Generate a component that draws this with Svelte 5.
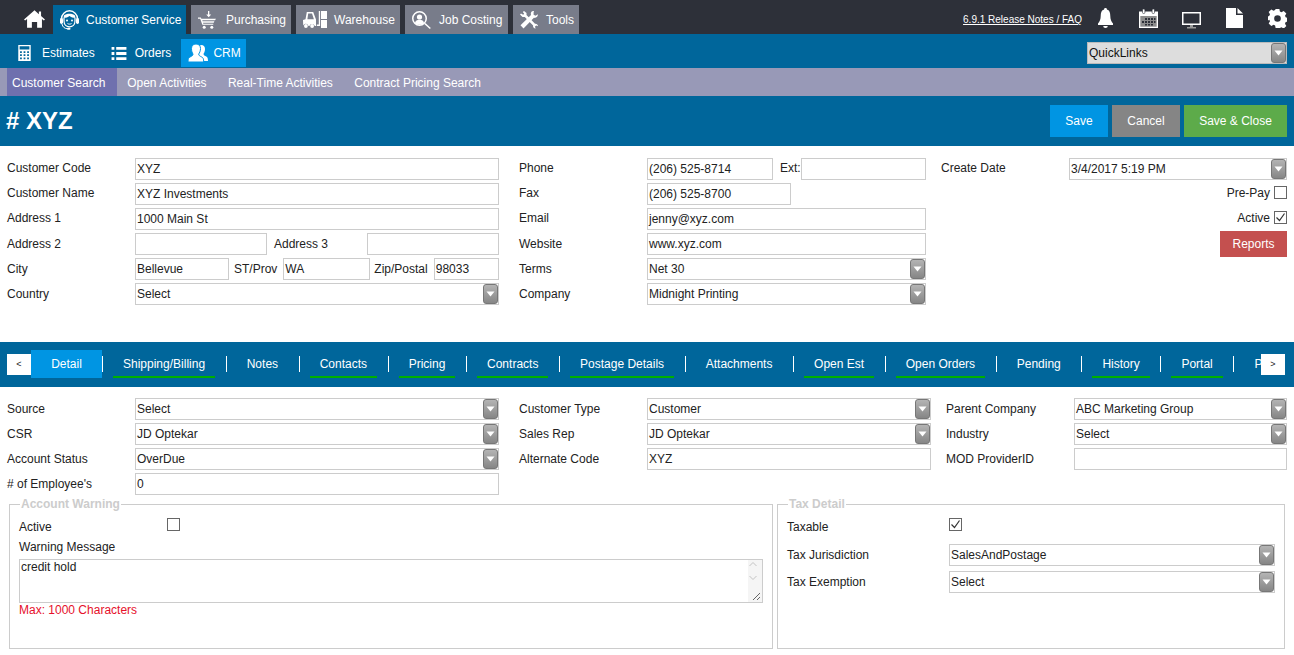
<script>
  const topTabs = [
    { label: 'Customer Service', icon: 'agent', active: true, w: 133, textAt: 33 },
    { label: 'Purchasing', icon: 'cart', w: 100, textAt: 35 },
    { label: 'Warehouse', icon: 'lift', w: 104, textAt: 38 },
    { label: 'Job Costing', icon: 'search', w: 103, textAt: 34 },
    { label: 'Tools', icon: 'tools', w: 66, textAt: 33 }
  ]
  const subTabs = ['Open Activities', 'Real-Time Activities', 'Contract Pricing Search']
  const tabs = [
    ['Shipping/Billing', 1], ['Notes', 0], ['Contacts', 1], ['Pricing', 1], ['Contracts', 1],
    ['Postage Details', 1], ['Attachments', 0], ['Open Est', 1], ['Open Orders', 1],
    ['Pending', 0], ['History', 1], ['Portal', 1]
  ]
</script>

{#snippet arrow()}
  <span class="arrow"><svg width="9" height="6" viewBox="0 0 9 6"><path d="M0.5 0.5h8L4.5 5.500z" fill="#fff" /></svg></span>
{/snippet}

{#snippet select(value, cls = '')}
  <div class="input select {cls}"><span>{value}</span>{@render arrow()}</div>
{/snippet}

{#snippet check(on = false)}
  <span class="check">
    {#if on}<svg width="11" height="11" viewBox="0 0 11 11"><path d="M1.500 5.500l3 3 5-7" fill="none" stroke="#333" stroke-width="1.200" /></svg>{/if}
  </span>
{/snippet}

{#snippet topIcon(name)}
  {#if name === 'agent'}
    <svg class="ticon" width="19" height="20" viewBox="0 0 19 20" fill="#fff">
      <path d="M9.500 0.800A8 8 0 0 0 1.500 8.800M9.500 0.800a8 8 0 0 1 8 8" fill="none" stroke="#fff" stroke-width="1.400" />
      <rect x="0" y="8" width="3" height="6" rx="1.400" />
      <rect x="16" y="8" width="3" height="6" rx="1.400" />
      <path d="M4 5.500C6 3 13 3 15 5.500L15.500 8C13 8 11 7.300 9.500 6 8 7.300 6 8 3.500 8z" />
      <path d="M4 8v3c0 3.500 2.500 5.800 5.500 5.800S15 14.500 15 11V8" fill="none" stroke="#fff" stroke-width="1.200" />
      <circle cx="7" cy="10.500" r="1" />
      <circle cx="12" cy="10.500" r="1" />
      <path d="M7.500 13.500c1 .8 3 .8 4 0" fill="none" stroke="#fff" />
      <path d="M2 14c.5 3 2.500 4.500 5.500 4.800" fill="none" stroke="#fff" />
      <rect x="7" y="17.800" width="3.500" height="2" rx="1" />
    </svg>
  {:else if name === 'cart'}
    <svg class="ticon" width="18" height="18" viewBox="0 0 18 18" fill="#fff">
      <path d="M10 0h1.300v3.500h1.900L10.700 6.300 8.200 3.500H10z" />
      <path d="M0 6.500h2.800l.6 1.300H18l-1 1.500H4.300l.3 1h11.800l-.7 1.400H5l.3 1h10v1H4.300L2.200 7.800H0z" />
      <circle cx="6.200" cy="16.300" r="1.500" />
      <circle cx="13.800" cy="16.300" r="1.500" />
    </svg>
  {:else if name === 'lift'}
    <svg class="ticon" width="24" height="17" viewBox="0 0 24 17" fill="#fff">
      <path fill-rule="evenodd" d="M0 9l2.500-.8L3.800 1h6.400L13 8.500V15h-1.200a2.800 2.800 0 0 0-5.400 0H5.500a2.800 2.800 0 0 0-5.300-.5zM5.200 2.500l-.8 5.700h6.500L9 2.500z" />
      <path d="M13.800 13.500h2V0h1.300v15h-3.300z" />
      <path d="M18 0h6v8h-6zM18 9h6v8h-6z" />
      <circle cx="2.900" cy="15" r="1.900" />
      <circle cx="9.100" cy="15" r="1.900" />
    </svg>
  {:else if name === 'search'}
    <svg class="ticon" width="19" height="18" viewBox="0 0 19 18" fill="#fff">
      <path fill-rule="evenodd" d="M7.500 0a7.500 7.500 0 1 0 0 15 7.500 7.500 0 0 0 0-15zm0 1.500a6 6 0 1 1 0 12 6 6 0 0 1 0-12z" />
      <circle cx="7.500" cy="6" r="2.600" />
      <path d="M3 12c.4-2.500 2-3.200 4.500-3.200S11.600 9.500 12 12c-2 2.200-7 2.200-9 0z" />
      <path d="M12.300 13l1.100-1.100 5.400 5-1 1.100z" />
    </svg>
  {:else}
    <svg class="ticon" width="18" height="18" viewBox="0 0 18 18" fill="#fff">
      <path d="M4 0l2.500 2v2L15 12.800c1.500-.3 3 .7 3 2.400l-1.800-.8-1.300 1.300.8 1.800c-2 0-3-1.500-2.600-3L4.800 6H2.500L0 3.500 1 2.500l2.200 1.300 1-1L2.800.9z" />
      <path d="M14 0c-1.800-.2-3.200 1-3.200 2.700 0 .4.100.8.200 1.200L0.500 14.200 3.500 17.500 13.900 6.800c2.200.5 4.300-1.200 3.900-3.500l-2.200 1.400-2-1V1.500z" />
    </svg>
  {/if}
{/snippet}

<div class="page">
  <div class="topbar">
    <svg class="home" width="21" height="18" viewBox="0 0 24 20" fill="#fff">
      <path d="M12 0L0 10.500l1.300 1.300L3.500 10v10H9v-6.500h6V20h5.500V10l2.200 1.800 1.300-1.300L19.500 6.500V1.500H17v3z" />
    </svg>
    {#each topTabs as t}
      <div class="top-tab" class:active={t.active} style="width:{t.w}px;grid-template-columns:{t.textAt}px 1fr">
        {@render topIcon(t.icon)}
        <span>{t.label}</span>
      </div>
    {/each}
    <div class="top-right">
      <a href="#notes" class="notes">6.9.1 Release Notes / FAQ</a>
      <svg class="bell" width="15" height="20" viewBox="0 0 15 20" fill="#fff"><path d="M7.500 0a1.400 1.400 0 0 0-1.400 1.600C3.500 2.300 2.700 4.800 2.700 8c0 3.500-1 5.500-2.700 7.500v1.500h15v-1.500C13.300 13.500 12.300 11.500 12.300 8c0-3.200-.8-5.700-3.400-6.400A1.400 1.400 0 0 0 7.500 0zM5.200 18a2.300 2 0 0 0 4.600 0z" /></svg>
      <svg class="cal" width="19" height="19" viewBox="0 0 19 19">
        <path d="M0 2.500h19V19H0z" fill="#fff" />
        <path d="M1.300 7h16.400v10.700H1.300z" fill="#8c8c8c" />
        <rect x="3.500" y="0" width="2.400" height="4.500" rx="1" fill="#fff" stroke="#2d3039" stroke-width=".6" />
        <rect x="13.100" y="0" width="2.400" height="4.500" rx="1" fill="#fff" stroke="#2d3039" stroke-width=".6" />
        <path d="M6 9h2v2H6zm3 0h2v2H9zm3 0h2v2h-2zm3 0h1.500v2H15zM3 12h2v2H3zm3 0h2v2H6zm3 0h2v2H9zm3 0h2v2h-2zm3 0h1.500v2H15zM6 15h2v1.500H6zm3 0h2v1.500H9zm3 0h2v1.500h-2z" fill="#2d3039" />
      </svg>
      <svg class="mon" width="19" height="17" viewBox="0 0 19 17">
        <path fill-rule="evenodd" fill="#fff" d="M0 0h19v13H0zM1.500 1.500v10h16v-10z" />
        <path fill="#9a9a9a" d="M8 13h3v2h3v1.500H5V15h3z" />
      </svg>
      <svg width="17" height="20" viewBox="0 0 17 20" fill="#fff"><path d="M0 0h10v7h7v13H0zM11.500 0L17 5.500h-5.500z" /></svg>
      <svg width="19" height="19" viewBox="0 0 20 20" fill="#fff"><path fill-rule="evenodd" d="M8 0h4l.5 2.700 1.700.7 2.300-1.400 2.800 2.800-1.400 2.300.7 1.700 2.400.5v4l-2.400.5-.7 1.700 1.400 2.300-2.800 2.800-2.300-1.400-1.700.7L12 20H8l-.5-2.700-1.700-.7-2.300 1.400L.7 15.200l1.400-2.300-.7-1.700L0 12V8l1.400-.800.7-1.700L.7 3.200 3.500.4l2.300 1.400 1.700-.7zM10 6.500a3.500 3.500 0 1 0 0 7 3.500 3.500 0 0 0 0-7z" /></svg>
    </div>
  </div>

  <div class="navbar">
    <div class="nav-item estimates">
      <svg width="13" height="16" viewBox="0 0 14 18" fill="#fff"><path fill-rule="evenodd" d="M0 0h14v18H0zM1.500 1.500v3.500h11V1.500zM2 7v2h2V7zm4 0v2h2V7zm4 0v2h2V7zM2 10.500v2h2v-2zm4 0v2h2v-2zm4 0v2h2v-2zM2 14v2h2v-2zm4 0v2h2v-2zm4 0v2h2v-2z" /></svg>
      <span>Estimates</span>
    </div>
    <div class="nav-item orders">
      <svg width="16" height="13" viewBox="0 0 16 14" fill="#fff"><path d="M0 0h3v3H0zM5 0h11v3H5zM0 5.500h3v3H0zM5 5.500h11v3H5zM0 11h3v3H0zM5 11h11v3H5z" /></svg>
      <span>Orders</span>
    </div>
    <div class="nav-item crm">
      <svg width="20" height="18" viewBox="0 0 20 18" fill="#fff">
        <path d="M13 1c3 0 4 2 4 4s-.7 3.800-1.500 4.800c0 1.200.8 1.700 2.300 2.500 1.200.6 2.200 1.200 2.200 4.700H10V3z" />
        <path stroke="#0095e3" stroke-width="1" d="M8 0c3 0 4.500 2 4.500 4.500 0 2.500-1 4.500-1.800 5.500 0 1.500 1 2 3 3 1.300.7 2 1.500 2 5H0c0-3.500.7-4.300 2-5 2-1 3-1.500 3-3C4.200 9 3.500 7 3.500 4.500 3.500 2 5 0 8 0z" />
      </svg>
      <span>CRM</span>
    </div>
    <div class="quick">
      <span>QuickLinks</span>
      {@render arrow()}
    </div>
  </div>

  <div class="subbar">
    <div class="sub active">Customer Search</div>
    {#each subTabs as s}
      <div class="sub">{s}</div>
    {/each}
  </div>

  <div class="titlebar">
    <h1># XYZ</h1>
    <div class="actions">
      <button class="btn b-blue">Save</button>
      <button class="btn b-grey">Cancel</button>
      <button class="btn b-green">Save &amp; Close</button>
    </div>
  </div>

  <div class="form top-form">
    <div class="col col-1">
      <div class="row"><label>Customer Code</label><div class="input grow">XYZ</div></div>
      <div class="row"><label>Customer Name</label><div class="input grow">XYZ Investments</div></div>
      <div class="row"><label>Address 1</label><div class="input grow">1000 Main St</div></div>
      <div class="row">
        <label>Address 2</label><div class="input w132"></div>
        <label class="mid a3">Address 3</label><div class="input grow"></div>
      </div>
      <div class="row">
        <label>City</label><div class="input w94">Bellevue</div>
        <label class="mid st">ST/Prov</label><div class="input w87">WA</div>
        <label class="mid zip">Zip/Postal</label><div class="input grow">98033</div>
      </div>
      <div class="row"><label>Country</label>{@render select('Select', 'grow')}</div>
    </div>
    <div class="col col-2">
      <div class="row"><label>Phone</label><div class="input w126">(206) 525-8714</div><label class="mid ext">Ext:</label><div class="input grow"></div></div>
      <div class="row"><label>Fax</label><div class="input w144">(206) 525-8700</div></div>
      <div class="row"><label>Email</label><div class="input grow">jenny@xyz.com</div></div>
      <div class="row"><label>Website</label><div class="input grow">www.xyz.com</div></div>
      <div class="row"><label>Terms</label>{@render select('Net 30', 'grow')}</div>
      <div class="row"><label>Company</label>{@render select('Midnight Printing', 'grow')}</div>
    </div>
    <div class="col col-3">
      <div class="row"><label>Create Date</label>{@render select('3/4/2017 5:19 PM', 'grow')}</div>
      <div class="row end"><span>Pre-Pay</span>{@render check()}</div>
      <div class="row end"><span>Active</span>{@render check(true)}</div>
      <div class="row end"><button class="btn b-red">Reports</button></div>
    </div>
  </div>

  <div class="tabbar">
    <div class="pager">&lt;</div>
    <div class="tab-active">Detail</div>
    <div class="tab-list">
      {#each tabs as [name, marked]}
        <div class="sep"></div>
        <div class="tab" class:marked>{name}</div>
      {/each}
      <div class="sep"></div>
      <div class="tab">P</div>
    </div>
    <div class="pager right">&gt;</div>
  </div>

  <div class="form detail-form">
    <div class="col col-1">
      <div class="row"><label>Source</label>{@render select('Select', 'grow')}</div>
      <div class="row"><label>CSR</label>{@render select('JD Optekar', 'grow')}</div>
      <div class="row"><label>Account Status</label>{@render select('OverDue', 'grow')}</div>
      <div class="row"><label># of Employee's</label><div class="input grow">0</div></div>
    </div>
    <div class="col col-2b">
      <div class="row"><label>Customer Type</label>{@render select('Customer', 'grow')}</div>
      <div class="row"><label>Sales Rep</label>{@render select('JD Optekar', 'grow')}</div>
      <div class="row"><label>Alternate Code</label><div class="input grow">XYZ</div></div>
    </div>
    <div class="col col-3b">
      <div class="row"><label>Parent Company</label>{@render select('ABC Marketing Group', 'grow')}</div>
      <div class="row"><label>Industry</label>{@render select('Select', 'grow')}</div>
      <div class="row"><label>MOD ProviderID</label><div class="input grow"></div></div>
    </div>
  </div>

  <div class="boxes">
    <fieldset class="warn">
      <legend>Account Warning</legend>
      <div class="fs-row"><label>Active</label>{@render check()}</div>
      <div class="msg-label">Warning Message</div>
      <div class="textarea">
        credit hold
        <div class="scroll">
          <svg width="10" height="34" viewBox="0 0 10 34" fill="none" stroke="#c4c4c4"><path d="M1.500 6L5 2.500 8.500 6M1.500 16L5 19.500 8.500 16" /></svg>
          <svg class="grip" width="9" height="9" viewBox="0 0 9 9" stroke="#666"><path d="M1 8l7-7M5 8l3-3" /></svg>
        </div>
      </div>
      <div class="max">Max: 1000 Characters</div>
    </fieldset>
    <fieldset class="tax">
      <legend>Tax Detail</legend>
      <div class="fs-row"><label>Taxable</label>{@render check(true)}</div>
      <div class="tax-row"><label>Tax Jurisdiction</label>{@render select('SalesAndPostage', 'grow')}</div>
      <div class="tax-row"><label>Tax Exemption</label>{@render select('Select', 'grow')}</div>
    </fieldset>
  </div>
</div>

<style>
  :global(body) {
    margin: 0;
    background: #fff;
    font-family: "Liberation Sans", Arial, sans-serif;
    font-size: 12px;
    color: #222;
    overflow: hidden;
  }
  .page {
    width: 1294px;
    height: 655px;
    overflow: hidden;
  }
  .topbar {
    height: 34px;
    background: #2d3039;
    display: flex;
    align-items: flex-end;
    gap: 5px;
    padding-left: 24px;
    box-sizing: border-box;
  }
  .home {
    margin: 0 3px 6px 0;
  }
  .top-tab {
    height: 29px;
    background: #787c8a;
    color: #fff;
    display: grid;
    align-items: center;
    box-sizing: border-box;
    white-space: nowrap;
  }
  .top-tab.active {
    background: #00669b;
  }
  .top-tab :global(.ticon) {
    margin-left: 7px;
  }
  .top-right {
    margin-left: auto;
    height: 34px;
    display: flex;
    align-items: center;
    gap: 25px;
    padding: 2px 7px 0 0;
    box-sizing: border-box;
    color: #fff;
  }
  .notes {
    color: #fff;
    font-size: 10px;
    text-decoration: underline;
    margin: 3px -9px 0 0;
  }
  .bell { margin-right: 1px; }
  .cal { margin-right: -1px; }
  .mon { margin-top: 4px; }
  .navbar {
    height: 34px;
    background: #00669b;
    display: flex;
    align-items: flex-end;
  }
  .nav-item {
    height: 28px;
    margin-bottom: 1px;
    display: flex;
    align-items: center;
    color: #fff;
    box-sizing: border-box;
  }
  .estimates {
    margin-left: 18px;
    gap: 11px;
  }
  .orders {
    margin-left: 16px;
    gap: 8px;
  }
  .nav-item.crm {
    background: #0095e3;
    margin-left: 10px;
    padding-left: 7px;
    width: 65px;
    gap: 5px;
  }
  .quick {
    margin: 0 7px 4px auto;
    width: 200px;
    height: 22px;
    background: #ddd;
    border: 1px solid #bbb;
    box-sizing: border-box;
    display: flex;
    align-items: center;
    justify-content: space-between;
    padding-left: 1px;
    color: #111;
  }
  .subbar {
    height: 28px;
    background: #9899b7;
    display: flex;
    padding-left: 7px;
    color: #fff;
  }
  .sub {
    padding: 0 10.7px;
    line-height: 30px;
  }
  .sub.active {
    background: #6f70ae;
    padding: 0 5px;
    width: 109.5px;
    box-sizing: border-box;
    white-space: nowrap;
  }
  .titlebar {
    height: 50px;
    background: #00669b;
    display: flex;
    align-items: center;
    justify-content: space-between;
    padding: 0 7px 0 6px;
  }
  h1 {
    margin: 0;
    color: #fff;
    font-size: 24px;
    font-weight: 700;
  }
  .actions {
    display: flex;
    gap: 4px;
    margin-top: -1px;
  }
  .btn {
    height: 32px;
    border: 0;
    color: #fff;
    font: inherit;
    padding: 0;
  }
  .b-blue { background: #0095e3; width: 58px; }
  .b-grey { background: #858585; width: 68px; }
  .b-green { background: #5dab4a; width: 103px; }
  .b-red { background: #c4504f; width: 67px; height: 26px; }

  .form {
    display: flex;
    padding-left: 7px;
  }
  .top-form {
    height: 196px;
    padding-top: 10px;
    box-sizing: border-box;
  }
  .top-form .row:nth-child(-n+3) label,
  .top-form .end span {
    margin-bottom: 2px;
  }
  .col {
    display: flex;
    flex-direction: column;
  }
  .col-1 { width: 492px; margin-right: 20px; }
  .col-2 { width: 407px; margin-right: 15px; }
  .col-3 { width: 346px; }
  .col-2b { width: 412px; margin-right: 15px; }
  .col-3b { width: 341px; }
  .row {
    height: 25px;
    display: flex;
    align-items: center;
    flex: none;
  }
  .row > label {
    width: 128px;
    flex: none;
  }
  .row > label.mid { width: auto; }
  .mid.a3 { margin-left: 7px; margin-right: 39px; }
  .mid.st { margin-left: 5px; margin-right: 6px; }
  .mid.zip { margin-left: 4px; margin-right: 6px; }
  .mid.ext { margin-left: 7px; margin-right: 0; }
  .row.end {
    justify-content: flex-end;
    gap: 4px;
  }
  .row.end .btn {
    margin-top: 1px;
  }
  .input {
    height: 22px;
    border: 1px solid #ccc;
    box-sizing: border-box;
    background: #fff;
    color: #222;
    padding-left: 1px;
    line-height: 20px;
    white-space: nowrap;
    flex: none;
  }
  .grow { flex: 1; min-width: 0; }
  .w132 { width: 132px; }
  .w94 { width: 94px; }
  .w87 { width: 87px; }
  .w126 { width: 126px; }
  .w144 { width: 144px; }
  .select {
    display: flex;
    justify-content: space-between;
    align-items: center;
  }
  .arrow {
    width: 15px;
    height: 20px;
    flex: none;
    box-sizing: border-box;
    border: 1px solid #777;
    border-radius: 3px;
    background: linear-gradient(#b4b4b4, #868686);
    display: flex;
    align-items: center;
    justify-content: center;
  }
  .check {
    width: 13px;
    height: 13px;
    box-sizing: border-box;
    border: 1px solid #666;
    background: #fff;
    display: inline-flex;
    align-items: center;
    justify-content: center;
    flex: none;
  }

  .tabbar {
    height: 45px;
    background: #00669b;
    display: flex;
    align-items: flex-start;
    padding: 8px 0 0 7px;
    box-sizing: border-box;
    position: relative;
    overflow: hidden;
  }
  .pager {
    width: 24px;
    height: 21px;
    margin-top: 4px;
    background: #fff;
    color: #222;
    font-size: 9px;
    line-height: 21px;
    text-align: center;
    flex: none;
  }
  .pager.right {
    position: absolute;
    right: 9px;
    top: 8px;
  }
  .tab-active {
    width: 71px;
    height: 28px;
    background: #0095e3;
    color: #fff;
    line-height: 28px;
    text-align: center;
    flex: none;
  }
  .tab-list {
    display: flex;
    align-items: flex-start;
    white-space: nowrap;
    color: #fff;
  }
  .sep {
    width: 1px;
    height: 16px;
    margin-top: 6px;
    background: #fff;
    flex: none;
  }
  .tab {
    margin: 2px 10.65px 0 10px;
    padding: 0 10px;
    height: 26px;
    line-height: 24px;
    box-sizing: border-box;
    border-bottom: 2px solid transparent;
    flex: none;
  }
  .tab.marked {
    border-bottom-color: #00b000;
  }

  .detail-form {
    height: 110px;
    padding-top: 9px;
    box-sizing: border-box;
  }
  .boxes {
    display: flex;
    gap: 4px;
    padding-left: 9px;
  }
  fieldset {
    margin: 0;
    border: 1px solid #ccc;
    height: 152px;
    box-sizing: border-box;
    padding: 0 9px;
  }
  legend {
    padding: 0 1px;
    color: #ccc;
    font-weight: 700;
    font-size: 12px;
    margin-left: 1px;
  }
  .warn { width: 764px; }
  .tax { width: 508px; }
  .fs-row {
    display: flex;
    height: 22px;
    align-items: center;
    margin-top: 4px;
  }
  .fs-row :global(.check) {
    margin-top: -3px;
  }
  .fs-row label {
    width: 148px;
    flex: none;
    margin-top: 2px;
  }
  .tax .fs-row label { width: 162px; }
  .msg-label {
    height: 20px;
    line-height: 20px;
  }
  .textarea {
    height: 44px;
    border: 1px solid #ccc;
    box-sizing: border-box;
    padding-left: 1px;
    margin-top: 2px;
    width: 744px;
    position: relative;
    line-height: 14px;
  }
  .scroll {
    position: absolute;
    right: 0;
    top: 0;
    bottom: 0;
    width: 14px;
    background: #f5f5f5;
  }
  .grip {
    position: absolute;
    right: 1px;
    bottom: 1px;
  }
  .max {
    color: #e6102b;
  }
  .tax-row {
    display: flex;
    align-items: center;
    height: 22px;
    margin-top: 5px;
  }
  .fs-row + .tax-row {
    margin-top: 7px;
  }
  .tax-row label {
    width: 162px;
    flex: none;
  }
</style>
